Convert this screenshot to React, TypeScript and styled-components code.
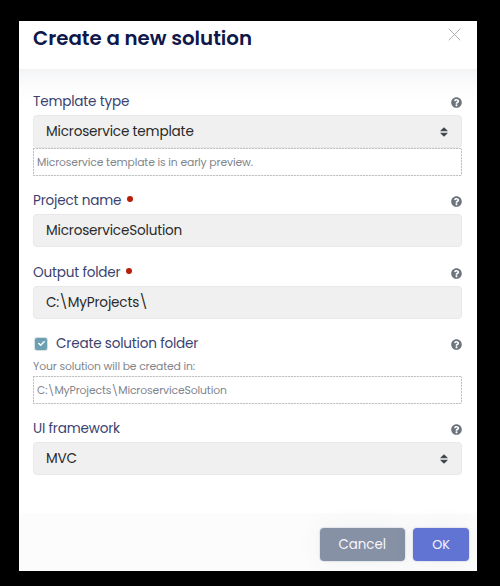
import React from 'react';
import styled, { createGlobalStyle } from 'styled-components';
import { FaCheck, FaQuestionCircle } from 'react-icons/fa';

const GlobalStyle = createGlobalStyle`
  * { box-sizing: border-box; }
  body { margin: 0; background: #000; font-family: Poppins, Inter, sans-serif; }
`;

const Backdrop = styled.div`
  height: 586px;
  padding: 21px 23px 15px 19px;
  background: #000;
`;

const Dialog = styled.section`
  display: flex;
  flex-direction: column;
  width: 458px;
  height: 550px;
  background: #fff;
  overflow: hidden;
`;

const Header = styled.header`
  display: flex;
  flex: none;
  justify-content: space-between;
  height: 48px;
  padding: 2px 16px 0 14px;
`;

const Title = styled.h1`
  margin: 0;
  font-size: 19.8px;
  font-weight: 600;
  line-height: 30px;
  color: #0e184b;
`;

const CloseButton = styled.button`
  display: flex;
  width: 13px;
  height: 13px;
  margin-top: 5px;
  padding: 0;
  border: 0;
  background: none;
`;

const Body = styled.div`
  flex: 1;
  padding: 21px 15.5px 0 14px;
  background: linear-gradient(#f2f3f5 0, #f7f8f9 7px, #fcfcfd 18px, #fff 34px);
`;

const Field = styled.div<{ $gap: number }>`
  display: flex;
  flex-direction: column;
  margin-bottom: ${(p) => p.$gap}px;
`;

const LabelRow = styled.div<{ $bottom?: number }>`
  display: flex;
  align-items: center;
  justify-content: space-between;
  height: 25px;
  padding-bottom: ${(p) => p.$bottom ?? 4}px;
`;

const Label = styled.label`
  display: flex;
  align-items: center;
  margin-top: 2px;
  font-size: 13.6px;
  line-height: 20px;
  letter-spacing: -0.2px;
  color: #3b426f;
  white-space: pre;
`;

const Required = styled.span`
  width: 6px;
  height: 6px;
  margin: -4px 0 0 5.5px;
  border-radius: 50%;
  background: #b91c08;
`;

const HelpIcon = styled(FaQuestionCircle)`
  width: 11px;
  height: 11px;
  margin-top: 3px;
  color: #6c757d;
`;

const Control = styled.div`
  display: flex;
  align-items: center;
  justify-content: space-between;
  height: 33px;
  padding: 0 13px 0 12px;
  border: 1px solid #e8e8e8;
  border-radius: 4px;
  background: #f0f0f0;
  font-size: 13.6px;
  letter-spacing: -0.18px;
  color: #292929;
`;

/* Fine 2px-on, 1px-off dashes on all four edges. */
const Note = styled.div`
  --h: repeating-linear-gradient(90deg, #c0c2c4 0 2px, #eceded 2px 3px);
  --v: repeating-linear-gradient(#c0c2c4 0 2px, #eceded 2px 3px);
  display: flex;
  align-items: center;
  height: 28px;
  padding: 1px 0 0 4px;
  background:
    var(--h) 0 0 / 100% 1px no-repeat,
    var(--h) 0 100% / 100% 1px no-repeat,
    var(--v) 0 0 / 1px 100% no-repeat,
    var(--v) 100% 0 / 1px 100% no-repeat;
  font-size: 10.8px;
  letter-spacing: -0.12px;
  color: #7f858c;
`;

const Caption = styled.div`
  height: 20px;
  font-size: 10.8px;
  line-height: 22px;
  letter-spacing: -0.13px;
  color: #7f858c;
`;

const Checkbox = styled.span`
  display: flex;
  align-items: center;
  justify-content: center;
  width: 12px;
  height: 12px;
  margin: 0 9px 0 2px;
  border-radius: 2px;
  background: #6c9fb2;
  box-shadow: 0 0 0 1px #d8dfe3;
  color: #fff;
`;

const Footer = styled.footer`
  display: flex;
  flex: none;
  justify-content: flex-end;
  gap: 8px;
  height: 58px;
  padding: 15px 8px 0 0;
  background: #fcfcfc;
`;

const Button = styled.button<{ $primary?: boolean }>`
  width: ${(p) => (p.$primary ? 56 : 85.5)}px;
  height: 33px;
  padding: 1px 0 0;
  border: 0;
  border-radius: 4px;
  background: ${(p) => (p.$primary ? '#6174d3' : '#8791a5')};
  box-shadow: 0 0 1px 1px #e3e5ec, 0 0 24px rgba(70, 80, 115, 0.07);
  font-family: inherit;
  font-size: ${(p) => (p.$primary ? 12.8 : 13.4)}px;
  color: #f5f6fb;
`;

const SortArrows = () => (
  <svg
    width="8"
    height="10"
    viewBox="0 0 8 10"
    fill="#343a40"
    stroke="#343a40"
    strokeWidth="0.7"
    strokeLinejoin="round"
  >
    <path d="M.7 3.8 4 .7 7.3 3.8ZM.7 6.2H7.3L4 9.3Z" />
  </svg>
);

export default function App() {
  return (
    <>
      <GlobalStyle />
      <Backdrop>
        <Dialog>
          <Header>
            <Title>Create a new solution</Title>
            <CloseButton aria-label="Close">
              <svg width="13" height="13" viewBox="0 0 13 13" stroke="#aaa" strokeWidth="0.9">
                <path d="M.7.7 12.3 12.3M12.3.7.7 12.3" />
              </svg>
            </CloseButton>
          </Header>
          <Body>
            <Field $gap={13}>
              <LabelRow>
                <Label>Template type</Label>
                <HelpIcon />
              </LabelRow>
              <Control>
                Microservice template
                <SortArrows />
              </Control>
              <Note>Microservice template is in early preview.</Note>
            </Field>
            <Field $gap={14}>
              <LabelRow>
                <Label>
                  Project name
                  <Required />
                </Label>
                <HelpIcon />
              </LabelRow>
              <Control>MicroserviceSolution</Control>
            </Field>
            <Field $gap={12}>
              <LabelRow>
                <Label>
                  Output folder
                  <Required />
                </Label>
                <HelpIcon />
              </LabelRow>
              <Control>C:\MyProjects\</Control>
            </Field>
            <Field $gap={13}>
              <LabelRow $bottom={2}>
                <Label>
                  <Checkbox>
                    <FaCheck size={7} />
                  </Checkbox>
                  Create solution folder
                </Label>
                <HelpIcon />
              </LabelRow>
              <Caption>Your solution will be created in:</Caption>
              <Note>C:\MyProjects\MicroserviceSolution</Note>
            </Field>
            <Field $gap={0}>
              <LabelRow>
                <Label>UI framework</Label>
                <HelpIcon />
              </LabelRow>
              <Control>
                MVC
                <SortArrows />
              </Control>
            </Field>
          </Body>
          <Footer>
            <Button>Cancel</Button>
            <Button $primary>OK</Button>
          </Footer>
        </Dialog>
      </Backdrop>
    </>
  );
}
